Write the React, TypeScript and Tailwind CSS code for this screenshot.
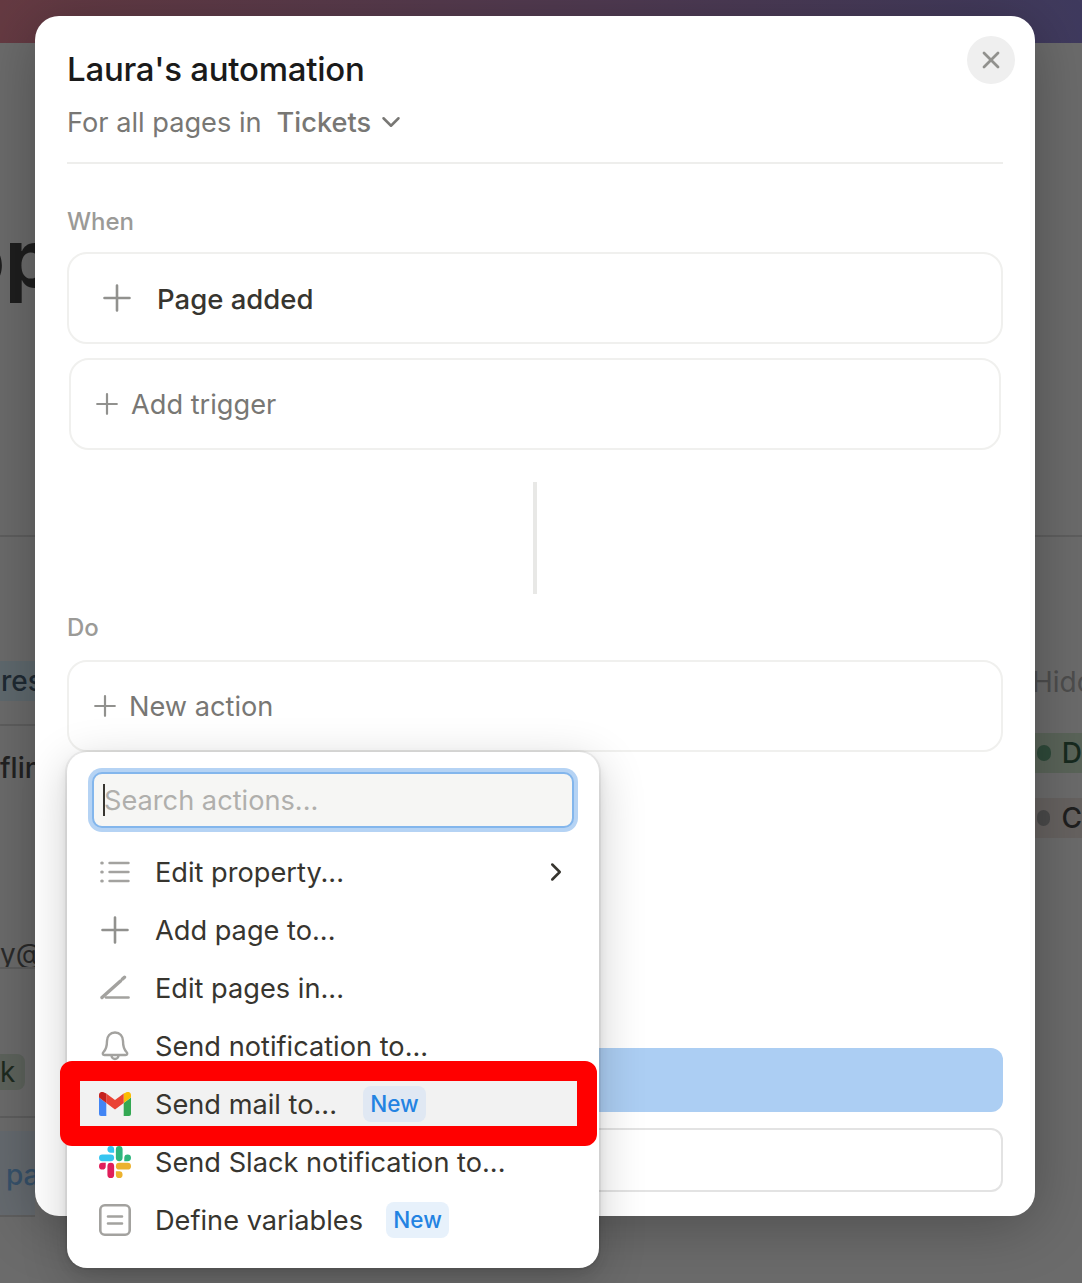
import { ChevronDown, ChevronRight, X } from "lucide-react";

function PlusIcon({ size, weight = 2.6 }: { size: number; weight?: number }) {
  return (
    <svg width={size} height={size} viewBox="0 0 28 28" fill="none" stroke="#91918e" strokeWidth={weight} strokeLinecap="round">
      <path d="M14 1.500v25M1.500 14h25" />
    </svg>
  );
}

function ListIcon() {
  return (
    <svg width="30" height="22" viewBox="0 0 30 22" fill="none" stroke="#a3a29f" strokeWidth="2.400" strokeLinecap="round">
      <path d="M9.500 2h19M9.500 11h19M9.500 20h19" />
      <path d="M1.800 2h.4M1.800 11h.4M1.800 20h.4" strokeWidth="3.200" />
    </svg>
  );
}

function PenIcon() {
  return (
    <svg width="30" height="26" viewBox="0 0 30 26" fill="none" stroke="#a3a29f" strokeWidth="2.600" strokeLinecap="round">
      <path d="M6 22.500h22.500" />
      <path d="M2 22.500 20.500 6" strokeWidth="3.400" />
      <path d="M22.500 4l2-1.800" strokeWidth="3.400" />
    </svg>
  );
}

function BellIcon() {
  return (
    <svg width="28" height="30" viewBox="0 0 28 30" fill="none" stroke="#a3a29f" strokeWidth="2.400" strokeLinejoin="round">
      <path d="M14 1.500c-5 0-8 3.800-8 8.500 0 6-1.500 9-3.500 11-1.200 1.200-1 3 1 3h21c2 0 2.200-1.800 1-3-2-2-3.500-5-3.500-11 0-4.700-3-8.500-8-8.500z" />
      <path d="M10.500 24.500a3.500 3.500 0 0 0 7 0" />
    </svg>
  );
}

function GmailIcon() {
  return (
    <svg width="32" height="24" viewBox="0 0 32 24">
      <path fill="#4285f4" d="M2 24h5.300V11L0 5.500V22a2 2 0 0 0 2 2z" />
      <path fill="#34a853" d="M24.700 24H30a2 2 0 0 0 2-2V5.500L24.700 11z" />
      <path fill="#fbbc04" d="M24.700 1.500V11L32 5.500V3c0-2.700-3-4-5-2.600z" />
      <path fill="#ea4335" d="M7.300 11V1.500L16 8l8.700-6.500V11L16 17.500z" />
      <path fill="#c5221f" d="M0 3v2.500L7.300 11V1.500L5 .4C3-1 0 .3 0 3z" />
    </svg>
  );
}

function SlackIcon() {
  return (
    <svg width="32" height="32" viewBox="0 0 24 24">
      <path fill="#e01e5a" d="M5.042 15.165a2.528 2.528 0 0 1-2.52 2.523A2.528 2.528 0 0 1 0 15.165a2.527 2.527 0 0 1 2.522-2.52h2.520v2.520zM6.313 15.165a2.527 2.527 0 0 1 2.521-2.520 2.527 2.527 0 0 1 2.521 2.520v6.313A2.528 2.528 0 0 1 8.834 24a2.528 2.528 0 0 1-2.521-2.522v-6.313z" />
      <path fill="#36c5f0" d="M8.834 5.042a2.528 2.528 0 0 1-2.521-2.520A2.528 2.528 0 0 1 8.834 0a2.528 2.528 0 0 1 2.521 2.522v2.520H8.834zM8.834 6.313a2.528 2.528 0 0 1 2.521 2.521 2.528 2.528 0 0 1-2.521 2.521H2.522A2.528 2.528 0 0 1 0 8.834a2.528 2.528 0 0 1 2.522-2.521h6.312z" />
      <path fill="#2eb67d" d="M18.956 8.834a2.528 2.528 0 0 1 2.522-2.521A2.528 2.528 0 0 1 24 8.834a2.528 2.528 0 0 1-2.522 2.521h-2.522V8.834zM17.688 8.834a2.528 2.528 0 0 1-2.523 2.521 2.527 2.527 0 0 1-2.520-2.521V2.522A2.527 2.527 0 0 1 15.165 0a2.528 2.528 0 0 1 2.523 2.522v6.312z" />
      <path fill="#ecb22e" d="M15.165 18.956a2.528 2.528 0 0 1 2.523 2.522A2.528 2.528 0 0 1 15.165 24a2.527 2.527 0 0 1-2.520-2.522v-2.522h2.520zM15.165 17.688a2.527 2.527 0 0 1-2.520-2.523 2.526 2.526 0 0 1 2.520-2.520h6.313A2.527 2.527 0 0 1 24 15.165a2.528 2.528 0 0 1-2.522 2.523h-6.313z" />
    </svg>
  );
}

function VariablesIcon() {
  return (
    <svg width="32" height="32" viewBox="0 0 32 32" fill="none" stroke="#a3a29f" strokeWidth="2.600" strokeLinecap="round">
      <rect x="1.300" y="1.300" width="29.400" height="29.400" rx="4.500" />
      <path d="M9 12.500h14M9 19.500h14" />
    </svg>
  );
}

function NewBadge({ active }: { active?: boolean }) {
  return (
    <span className={`flex h-9 w-[63px] items-center justify-center rounded-lg text-[22.500px] font-medium text-[#2383e2] ${active ? "ml-[26px] bg-[#e0e8f3]" : "ml-[23px] bg-[#e7f1fb]"}`}>
      New
    </span>
  );
}

function MenuRow({ icon, label, badge, arrow, active }: { icon: React.ReactNode; label: string; badge?: boolean; arrow?: boolean; active?: boolean }) {
  return (
    <div className={`mx-2 flex h-[58px] items-center rounded-lg ${active ? "bg-[#f2f2f2]" : ""}`}>
      <span className="flex w-[64px] shrink-0 justify-center pl-[16px]">{icon}</span>
      <span className="ml-[16px] pt-[2px] text-[27.200px] text-[#37352f]">{label}</span>
      {badge ? <NewBadge active={active} /> : null}
      {arrow ? <ChevronRight className="ml-auto mr-[20px] text-[#37352f]" size={30} strokeWidth={2} /> : null}
    </div>
  );
}

function ActionMenu() {
  return (
    <div className="absolute left-[32px] top-[736px] h-[516px] w-[532px] rounded-[20px] bg-white pt-[20px] shadow-[0_0_0_2px_rgba(15,15,15,0.05),0_6px_12px_rgba(15,15,15,0.1),0_12px_48px_rgba(15,15,15,0.2)]">
      <div className="mx-[25px] flex h-[56px] items-center rounded-[10px] border-2 border-[#83b6ec] bg-[#f6f6f4] shadow-[0_0_0_4px_#b5d3f4]">
        <span className="ml-[9px] h-[32px] w-[2px] bg-[#37352f]" />
        <span className="ml-[-1px] pt-[2px] text-[27.200px] text-[#b0afac]">Search actions...</span>
      </div>
      <div className="mt-[15px]">
        <MenuRow icon={<ListIcon />} label="Edit property..." arrow />
        <MenuRow icon={<PlusIcon size={28} />} label="Add page to..." />
        <MenuRow icon={<PenIcon />} label="Edit pages in..." />
        <MenuRow icon={<BellIcon />} label="Send notification to..." />
        <MenuRow icon={<GmailIcon />} label="Send mail to..." badge active />
        <MenuRow icon={<SlackIcon />} label="Send Slack notification to..." />
        <MenuRow icon={<VariablesIcon />} label="Define variables" badge />
      </div>
    </div>
  );
}

function Modal() {
  return (
    <div className="absolute left-[35px] top-4 h-[1200px] w-[1000px] rounded-[24px] bg-white px-[32px] pt-[32px] shadow-[0_8px_60px_rgba(0,0,0,0.28)]">
      <button className="absolute right-[20px] top-[20px] flex h-12 w-12 items-center justify-center rounded-full bg-[#efefef] text-[#91918e]">
        <X size={28} strokeWidth={2.400} />
      </button>
      <h1 className="text-[33px] leading-[42px] font-medium tracking-[-0.25px] text-[#1a1a1a]">Laura's automation</h1>
      <div className="mt-3 flex h-10 items-center text-[27.200px] text-[#787774]">
        <span className="pt-[2px]">For all pages in</span>
        <span className="ml-[15px] pt-[2px] font-medium">Tickets</span>
        <ChevronDown className="ml-[5px]" size={30} strokeWidth={2} />
      </div>
      <div className="mt-5 h-[2px] bg-[#eeeeec]" />

      <p className="mt-[42px] h-8 text-[24px] leading-8 font-medium text-[#9b9a97]">When</p>
      <div className="mt-[14px] flex h-[92px] items-center rounded-[20px] border-2 border-[#f0f0ee] pl-[34px]">
        <PlusIcon size={28} />
        <span className="ml-[26px] pt-[4px] text-[27.500px] font-medium text-[#37352f]">Page added</span>
      </div>
      <div className="mx-[2px] mt-[14px] flex h-[92px] items-center rounded-[20px] border-2 border-[#f0f0ee] pl-[25px]">
        <PlusIcon size={22} weight={2.800} />
        <span className="ml-[13px] pt-[2px] text-[27.200px] text-[#787774]">Add trigger</span>
      </div>

      <div className="mx-auto mt-8 h-[112px] w-[4px] bg-[#e8e8e6]" />

      <p className="mt-[18px] h-8 text-[24px] leading-8 font-medium text-[#9b9a97]">Do</p>
      <div className="mt-[16px] flex h-[92px] items-center rounded-[20px] border-2 border-[#f0f0ee] pl-[25px]">
        <PlusIcon size={22} weight={2.800} />
        <span className="ml-[13px] pt-[3px] text-[27.200px] text-[#787774]">New action</span>
      </div>

      <div className="mt-[296px] h-16 rounded-xl bg-[#accef3]" />
      <div className="mt-4 h-16 rounded-xl border-2 border-[#e3e3e3]" />

      <ActionMenu />
    </div>
  );
}

function LeftGutter() {
  return (
    <div className="flex w-[35px] flex-col overflow-hidden text-[#222]">
      <div className="mt-[170px] flex h-[90px] overflow-hidden text-[80px] leading-[90px] font-bold text-[#1e1e1e]">
        <span className="ml-[-44px] shrink-0">op</span>
      </div>
      <div className="mt-[232px] h-[2px] bg-[#5e5e5e]" />
      <div className="mt-[124px] flex h-[40px] items-center overflow-hidden bg-[#5f696e] pl-[1px] text-[28px] font-medium text-[#1f2a33]">
        <span className="shrink-0">res</span>
      </div>
      <div className="mt-[23px] h-[2px] bg-[#5e5e5e]" />
      <div className="mt-[24px] flex h-[36px] items-center overflow-hidden text-[28px] font-medium">
        <span className="shrink-0">flin</span>
      </div>
      <div className="mt-[153px] flex h-[30px] items-center overflow-hidden text-[28px] text-[#2a2a2a]">
        <span className="shrink-0">y@</span>
      </div>
      <div className="mt-[-2px] h-[2px] bg-[#5e5e5e]" />
      <div className="mt-[85px] flex h-[36px] w-[25px] items-center rounded-r-lg bg-[#5d635c] text-[28px] text-[#1d2a1f]">
        k
      </div>
      <div className="mt-[26px] h-[2px] bg-[#5e5e5e]" />
      <div className="mt-[13px] flex h-[84px] items-center overflow-hidden bg-[#656a6f] pl-[6px] pt-[4px] text-[28px] font-medium text-[#37526b]">
        <span className="shrink-0">pa</span>
      </div>
      <div className="h-[2px] bg-[#5e5e5e]" />
    </div>
  );
}

function StatusChip({ dot, bg, color, letter }: { dot: string; bg: string; color: string; letter: string }) {
  return (
    <div className={`flex h-[40px] items-center ${bg} pl-[2px] text-[28px] font-medium ${color}`}>
      <span className={`h-4 w-4 rounded-full ${dot}`} />
      <span className="ml-[11px]">{letter}</span>
    </div>
  );
}

function RightGutter() {
  return (
    <div className="flex w-[47px] flex-col overflow-hidden">
      <div className="mt-[492px] h-[2px] bg-[#5e5e5e]" />
      <div className="ml-[-3px] mt-[125px] flex h-10 items-center text-[28px] whitespace-nowrap text-[#4d4d4d]">Hidden</div>
      <div className="mt-[31px]">
        <StatusChip dot="bg-[#2f4a3a]" bg="bg-[#5a6459]" color="text-[#172a1f]" letter="D" />
      </div>
      <div className="mt-[25px]">
        <StatusChip dot="bg-[#4a4a4a]" bg="bg-[#666260]" color="text-[#1f1f1f]" letter="C" />
      </div>
    </div>
  );
}

export default function App() {
  return (
    <div className="relative h-[1283px] w-[1082px] overflow-hidden bg-[#6b6b6b] font-['Inter',sans-serif]">
      <div className="h-[43px] bg-gradient-to-r from-[#653a42] to-[#3f3a5e]" />
      <div className="flex justify-between">
        <LeftGutter />
        <RightGutter />
      </div>
      <Modal />
      <div className="absolute left-[60px] top-[1061px] h-[85px] w-[537px] rounded-xl border-[20px] border-[#ff0000]" />
    </div>
  );
}
